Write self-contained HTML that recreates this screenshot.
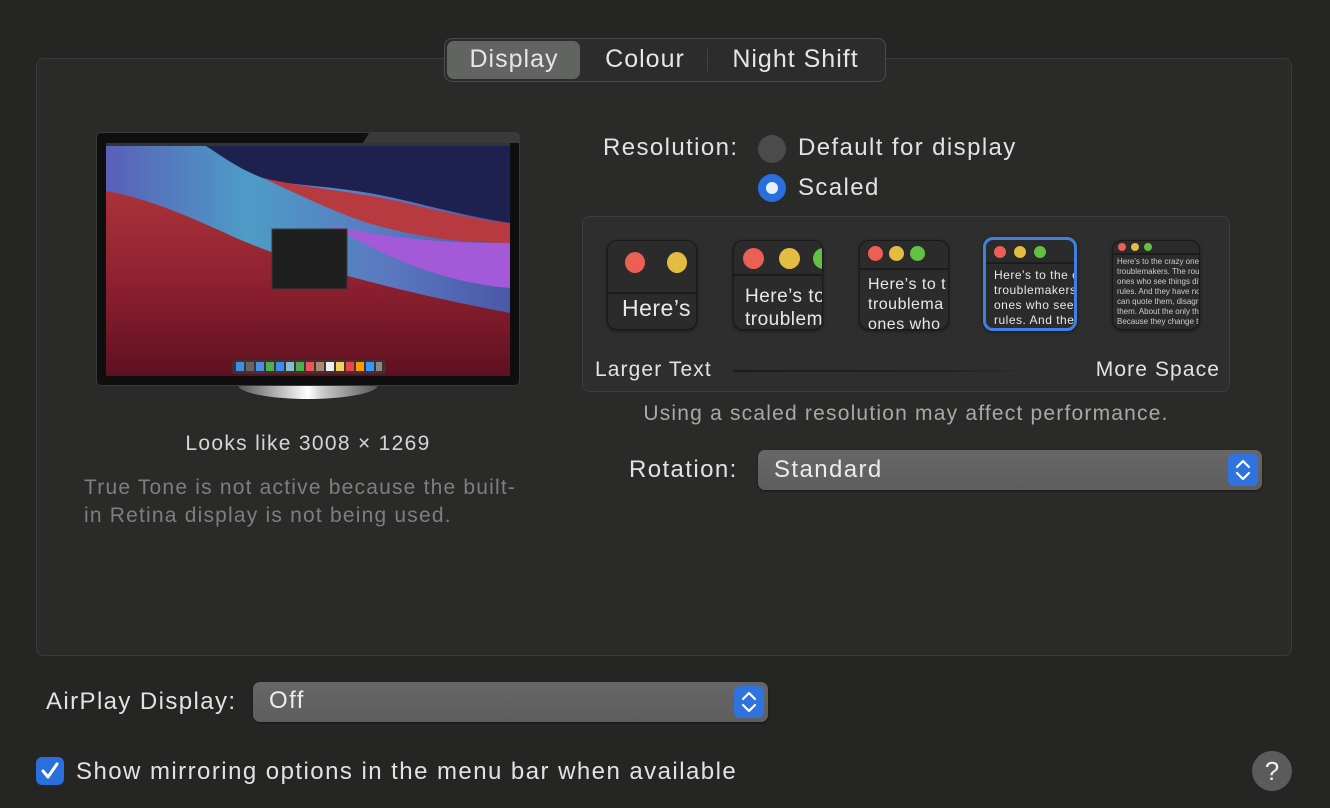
<!DOCTYPE html>
<html><head><meta charset="utf-8"><style>
*{margin:0;padding:0;box-sizing:border-box}
body{width:1330px;height:808px;background:#252624;font-family:"Liberation Sans",sans-serif;color:#dedede;position:relative;overflow:hidden}
.abs{position:absolute}
.panel{left:36px;top:58px;width:1256px;height:598px;border:1px solid #3a3b3a;border-radius:8px;background:#2a2b29}
.tabs{left:444px;top:38px;width:442px;height:44px;border:1px solid #4a4b4a;border-radius:8px;background:#2b2c2b}
.tab{position:absolute;top:0;height:42px;line-height:40px;font-size:25px;color:#e6e6e6;text-align:center;letter-spacing:1px}
.t{font-size:24px;color:#e2e2e2;white-space:nowrap;letter-spacing:1.4px}
.thumb{position:absolute;top:240px;width:90px;height:90px;border-radius:10px;background:#2b2b2b;border:1px solid #1a1a1a;overflow:hidden;box-shadow:0 1px 3px rgba(0,0,0,.5)}
.dot{position:absolute;border-radius:50%}
.r{background:#ec5f55}.y{background:#e2bd42}.g{background:#62c144}
.thumb .bar{position:absolute;left:0;right:0;border-bottom:2px solid #1c1c1c}
.thumb .txt{position:absolute;white-space:nowrap;color:#e8e8e8;letter-spacing:.5px}
.popup{border-radius:7px;background:linear-gradient(#676767,#5e5e5e);box-shadow:0 1px 2px rgba(0,0,0,.5)}
.arrows{position:absolute;right:4px;top:4px;width:30px;height:32px;border-radius:6px;background:#2f73e0}
</style></head><body>
<div class="abs panel"></div>
<div class="abs tabs">
 <div class="abs" style="left:2px;top:2px;width:133px;height:38px;border-radius:7px;background:#626462"></div>
 <div class="tab" style="left:0;width:138px">Display</div>
 <div class="tab" style="left:138px;width:124px">Colour</div>
 <div class="abs" style="left:262px;top:10px;width:1px;height:22px;background:#444"></div>
 <div class="tab" style="left:263px;width:175px">Night Shift</div>
</div>

<!-- monitor -->
<div class="abs" style="left:238px;top:382px;width:140px;height:17px;border-radius:0 0 70px 70px/0 0 14px 14px;background:linear-gradient(90deg,#555,#ddd 40%,#fff 50%,#ccc 60%,#555)"></div>
<div class="abs" style="left:96px;top:132px;width:424px;height:254px;border-radius:5px;background:#0f0f0f;border:1px solid #3a3a3a"></div>
<svg class="abs" style="left:97px;top:133px" width="422" height="10"><path d="M272 0 L422 0 L422 10 L266 10Z" fill="#3a3a3a"/></svg>
<svg class="abs" style="left:106px;top:143px" width="404" height="233" viewBox="0 0 404 233">
 <defs>
  <linearGradient id="bg" x1="0" y1="0" x2="0" y2="1"><stop offset="0" stop-color="#b83c3f"/><stop offset=".6" stop-color="#8e2030"/><stop offset="1" stop-color="#5e1020"/></linearGradient>
  <linearGradient id="bl" x1="0" y1="0" x2="1" y2="0"><stop offset="0" stop-color="#5a5fb8"/><stop offset=".35" stop-color="#4d9cc6"/><stop offset=".7" stop-color="#5a78c0"/><stop offset="1" stop-color="#4a58a8"/></linearGradient>
 </defs>
 <rect width="404" height="233" fill="url(#bg)"/>
 <path d="M0 0 L404 0 L404 170 C300 150 200 125 130 95 C80 72 40 55 0 48Z" fill="url(#bl)"/>
 <path d="M95 0 L404 0 L404 80 C340 70 300 55 250 48 C210 42 180 42 157 35 C130 25 112 10 95 0Z" fill="#1e2150"/>
 <path d="M157 35 C200 45 260 50 300 60 C340 70 380 78 404 80 L404 100 C360 100 320 95 280 85 C240 75 200 55 157 35Z" fill="#b63a40"/>
 <path d="M225 82 C280 95 330 100 404 100 L404 145 C340 140 280 115 225 82Z" fill="#a45ad8"/>
 <rect x="0" y="0" width="404" height="3" fill="#333"/>
 <rect x="166" y="86" width="75" height="60" fill="#1f1f1f" stroke="#3a3a3a"/>
 <rect x="126" y="217" width="154" height="14" rx="3" fill="#3a3a3a" opacity=".8"/>
 <g>
 <rect x="130" y="219" width="8" height="9" fill="#3d8ee8"/><rect x="140" y="219" width="8" height="9" fill="#666"/><rect x="150" y="219" width="8" height="9" fill="#4a90e2"/><rect x="160" y="219" width="8" height="9" fill="#4caf50"/><rect x="170" y="219" width="8" height="9" fill="#3d8ee8"/><rect x="180" y="219" width="8" height="9" fill="#8bc"/><rect x="190" y="219" width="8" height="9" fill="#4caf50"/><rect x="200" y="219" width="8" height="9" fill="#e55"/><rect x="210" y="219" width="8" height="9" fill="#a87"/><rect x="220" y="219" width="8" height="9" fill="#eee"/><rect x="230" y="219" width="8" height="9" fill="#f0d060"/><rect x="240" y="219" width="8" height="9" fill="#e44"/><rect x="250" y="219" width="8" height="9" fill="#f90"/><rect x="260" y="219" width="8" height="9" fill="#39f"/><rect x="270" y="219" width="6" height="9" fill="#888"/>
 </g>
</svg>

<div class="abs t" style="left:0;width:616px;top:432px;text-align:center;font-size:21px;color:#d6d6d6;letter-spacing:1.3px">Looks like 3008 × 1269</div>
<div class="abs" style="left:84px;top:474px;width:450px;font-size:21px;line-height:28px;color:#7e7e7e;letter-spacing:1.2px">True Tone is not active because the built-in Retina display is not being used.</div>

<div class="abs t" style="left:603px;top:134px">Resolution:</div>
<div class="abs" style="left:758px;top:135px;width:28px;height:28px;border-radius:50%;background:#4a4b4a"></div>
<div class="abs t" style="left:798px;top:134px">Default for display</div>
<div class="abs" style="left:758px;top:174px;width:28px;height:28px;border-radius:50%;background:#2a6fde"></div>
<div class="abs" style="left:766px;top:182px;width:12px;height:12px;border-radius:50%;background:#e8f0ff"></div>
<div class="abs t" style="left:798px;top:174px">Scaled</div>

<div class="abs" style="left:582px;top:216px;width:648px;height:176px;border:1px solid #3c3d3c;border-radius:8px;background:#2d2e2d"></div>
<div class="thumb" style="left:607px"><div class="bar" style="top:0;height:53px"></div>
 <div class="dot r" style="left:17px;top:11px;width:20px;height:21px"></div><div class="dot y" style="left:59px;top:11px;width:20px;height:21px"></div>
 <div class="txt" style="left:14px;top:54px;font-size:23px">Here’s</div></div>
<div class="thumb" style="left:733px"><div class="bar" style="top:0;height:35px"></div>
 <div class="dot r" style="left:9px;top:7px;width:21px;height:21px"></div><div class="dot y" style="left:45px;top:7px;width:21px;height:21px"></div><div class="dot g" style="left:79px;top:7px;width:21px;height:21px"></div>
 <div class="txt" style="left:11px;top:44px;font-size:19px;line-height:23px">Here’s to<br>troublem</div></div>
<div class="thumb" style="left:859px"><div class="bar" style="top:0;height:29px"></div>
 <div class="dot r" style="left:8px;top:5px;width:15px;height:15px"></div><div class="dot y" style="left:29px;top:5px;width:15px;height:15px"></div><div class="dot g" style="left:50px;top:5px;width:15px;height:15px"></div>
 <div class="txt" style="left:8px;top:34px;font-size:16px;line-height:20px">Here’s to t<br>troublema<br>ones who</div></div>
<div class="thumb" style="left:983px;top:237px;width:94px;height:94px;border:3px solid #3d82e0"><div class="bar" style="top:0;height:24px"></div>
 <div class="dot r" style="left:8px;top:6px;width:12px;height:12px"></div><div class="dot y" style="left:28px;top:6px;width:12px;height:12px"></div><div class="dot g" style="left:48px;top:6px;width:12px;height:12px"></div>
 <div class="txt" style="left:8px;top:28px;font-size:12px;line-height:15px">Here’s to the cr<br>troublemakers.<br>ones who see t<br>rules. And they</div></div>
<div class="thumb" style="left:1112px;width:88px"><div class="bar" style="top:0;height:14px"></div>
 <div class="dot r" style="left:5px;top:2px;width:8px;height:8px"></div><div class="dot y" style="left:18px;top:2px;width:8px;height:8px"></div><div class="dot g" style="left:31px;top:2px;width:8px;height:8px"></div>
 <div class="txt" style="left:4px;top:16px;font-size:8px;line-height:10px;color:#ccc;letter-spacing:0">Here's to the crazy one<br>troublemakers. The rou<br>ones who see things dif<br>rules. And they have no<br>can quote them, disagr<br>them. About the only th<br>Because they change th</div></div>
<div class="abs t" style="left:595px;top:358px;font-size:21px;letter-spacing:1.1px">Larger Text</div>
<div class="abs" style="left:733px;top:370px;width:300px;height:2px;background:linear-gradient(90deg,#1c1c1c,#222 70%,transparent)"></div>
<div class="abs t" style="right:110px;top:358px;font-size:21px;letter-spacing:1.1px">More Space</div>
<div class="abs" style="left:582px;top:402px;width:648px;text-align:center;font-size:21px;color:#a8a8a8;letter-spacing:1.2px;white-space:nowrap">Using a scaled resolution may affect performance.</div>

<div class="abs t" style="left:629px;top:456px">Rotation:</div>
<div class="abs popup" style="left:758px;top:450px;width:504px;height:40px"><div class="t" style="position:absolute;left:16px;top:6px;font-size:24px;color:#ececec">Standard</div>
 <div class="arrows"><svg width="30" height="32"><path d="M9 13 L15 7 L21 13 M9 19 L15 25 L21 19" fill="none" stroke="#fff" stroke-width="2.2" stroke-linecap="round" stroke-linejoin="round"/></svg></div></div>

<div class="abs t" style="left:46px;top:688px">AirPlay Display:</div>
<div class="abs popup" style="left:253px;top:682px;width:515px;height:40px"><div class="t" style="position:absolute;left:16px;top:5px;font-size:24px;color:#ececec">Off</div>
 <div class="arrows"><svg width="30" height="32"><path d="M9 13 L15 7 L21 13 M9 19 L15 25 L21 19" fill="none" stroke="#fff" stroke-width="2.2" stroke-linecap="round" stroke-linejoin="round"/></svg></div></div>

<div class="abs" style="left:36px;top:757px;width:28px;height:28px;border-radius:6px;background:#2a6fde"><svg width="28" height="28"><path d="M7 14 L12 20 L21 7" fill="none" stroke="#fff" stroke-width="3" stroke-linecap="round" stroke-linejoin="round"/></svg></div>
<div class="abs t" style="left:76px;top:758px;letter-spacing:1.45px">Show mirroring options in the menu bar when available</div>
<div class="abs" style="left:1252px;top:751px;width:40px;height:40px;border-radius:50%;background:#5a5b5a;text-align:center;line-height:40px;font-size:26px;color:#eee">?</div>
</body></html>
